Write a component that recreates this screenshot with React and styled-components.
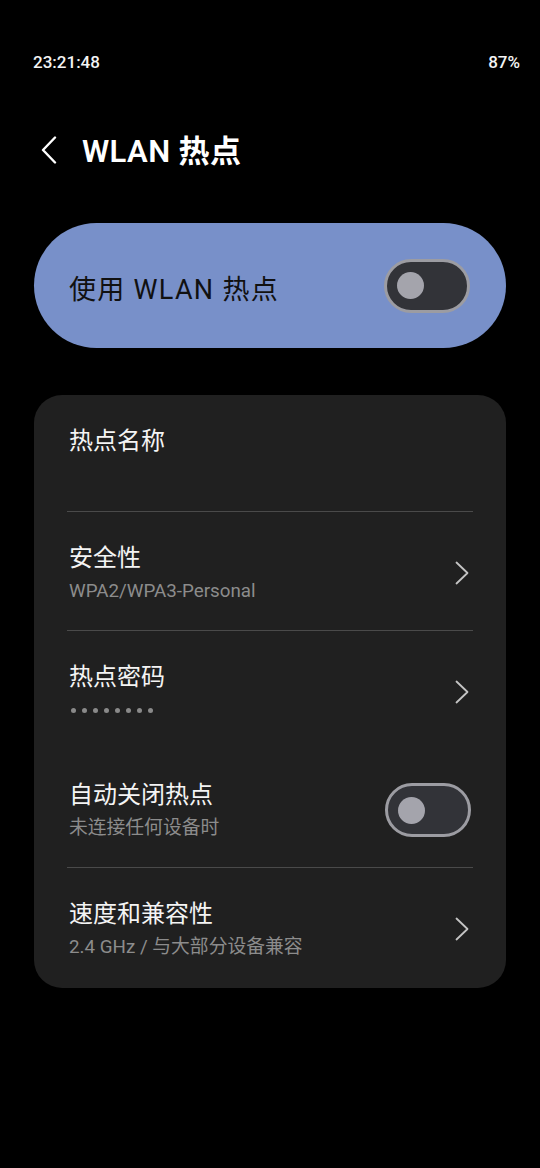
import React from 'react';
import styled, { createGlobalStyle } from 'styled-components';

const GlobalStyle = createGlobalStyle`
  html, body {
    margin: 0;
    padding: 0;
    background: #000;
  }
  body {
    font-family: Roboto, "Noto Sans CJK SC", sans-serif;
    color: #f2f2f2;
    -webkit-font-smoothing: antialiased;
  }
`;

export default function App() {
  return (
    <Page>
      <GlobalStyle />
      <StatusBar>
        <span>23:21:48</span>
        <span>87%</span>
      </StatusBar>

      <Header>
        <BackButton aria-label="返回">
          <svg width="20" height="28" viewBox="0 0 20 28" fill="none">
            <path d="M15 1.5 L3 14 L15 26.5" stroke="#fff" strokeWidth="2.4" strokeLinecap="round" strokeLinejoin="round" />
          </svg>
        </BackButton>
        <Title>WLAN 热点</Title>
      </Header>

      <MasterCard>
        <MasterLabel>使用 WLAN 热点</MasterLabel>
        <Switch />
      </MasterCard>

      <ListCard>
        <Row>
          <RowText>
            <RowTitle>热点名称</RowTitle>
            <EmptySub />
          </RowText>
        </Row>
        <Divider />
        <Row>
          <RowText>
            <RowTitle>安全性</RowTitle>
            <RowSub>WPA2/WPA3-Personal</RowSub>
          </RowText>
          <Chevron />
        </Row>
        <Divider />
        <Row>
          <RowText>
            <RowTitle>热点密码</RowTitle>
            <Dots>
              {Array.from({ length: 8 }).map((_, i) => (
                <Dot key={i} />
              ))}
            </Dots>
          </RowText>
          <Chevron />
        </Row>
        <Row>
          <RowText>
            <RowTitle>自动关闭热点</RowTitle>
            <RowSub>未连接任何设备时</RowSub>
          </RowText>
          <Switch $inset />
        </Row>
        <Divider />
        <Row>
          <RowText>
            <RowTitle>速度和兼容性</RowTitle>
            <RowSub>2.4 GHz / 与大部分设备兼容</RowSub>
          </RowText>
          <Chevron />
        </Row>
      </ListCard>
    </Page>
  );
}

function Chevron() {
  return (
    <ChevronBox>
      <svg width="24" height="24" viewBox="0 0 24 24" fill="none">
        <path d="M7.5 1.5 L18.5 12 L7.5 22.5" stroke="#c4c4c4" strokeWidth="1.8" strokeLinecap="round" strokeLinejoin="round" />
      </svg>
    </ChevronBox>
  );
}

function Switch({ $inset }) {
  return (
    <Track $inset={$inset}>
      <Knob />
    </Track>
  );
}

const Page = styled.div`
  width: 540px;
  min-height: 1168px;
  background: #000;
  display: flex;
  flex-direction: column;
`;

const StatusBar = styled.div`
  display: flex;
  justify-content: space-between;
  padding: 50px 20px 0 33px;
  font-size: 17px;
  line-height: 24px;
  font-weight: 500;
  color: #f4f4f4;
`;

const Header = styled.div`
  display: flex;
  align-items: center;
  height: 56px;
  margin-top: 48px;
  padding-left: 40px;
  gap: 22px;
`;

const BackButton = styled.div`
  display: flex;
  align-items: center;
  width: 20px;
  height: 28px;
`;

const Title = styled.h1`
  margin: 0;
  font-size: 31px;
  font-weight: 600;
  color: #fff;
  letter-spacing: 0.4px;
  margin-top: -3px;
`;

const MasterCard = styled.div`
  margin: 45px 34px 0;
  height: 125px;
  border-radius: 63px;
  background: #7890c9;
  display: flex;
  align-items: center;
  justify-content: space-between;
  padding: 0 36px 0 35px;
  box-sizing: border-box;
`;

const MasterLabel = styled.span`
  font-size: 27px;
  letter-spacing: 1.3px;
  color: #111;
  margin-top: 3px;
`;

const Track = styled.div`
  width: 86px;
  height: 54px;
  box-sizing: border-box;
  border-radius: 27px;
  border: 3px solid #9c9ca2;
  background: #323338;
  display: flex;
  align-items: center;
  padding-left: 10px;
  flex-shrink: 0;
  margin-right: ${(p) => (p.$inset ? '2px' : '0')};
`;

const Knob = styled.div`
  width: 27px;
  height: 27px;
  border-radius: 50%;
  background: #a4a4ac;
`;

const ListCard = styled.div`
  margin: 47px 34px 0;
  border-radius: 28px;
  background: #202020;
  padding: 0 33px 2px;
  display: flex;
  flex-direction: column;
`;

const Row = styled.div`
  display: flex;
  align-items: center;
  justify-content: space-between;
  padding: 30px 0 26px 2px;
`;

const RowText = styled.div`
  display: flex;
  flex-direction: column;
  gap: 4px;
`;

const RowTitle = styled.span`
  font-size: 24px;
  line-height: 32px;
  color: #f4f4f4;
`;

const RowSub = styled.span`
  font-size: 18.8px;
  line-height: 26px;
  color: #8c8c8c;
`;

const EmptySub = styled.span`
  height: 24px;
`;

const Dots = styled.div`
  display: flex;
  align-items: center;
  gap: 6px;
  height: 26px;
  padding-left: 2px;
`;

const Dot = styled.span`
  width: 5px;
  height: 5px;
  border-radius: 50%;
  background: #8a8a8a;
`;

const Divider = styled.div`
  height: 1px;
  background: #4a4a4a;
`;

const ChevronBox = styled.div`
  display: flex;
  width: 24px;
  height: 24px;
`;
